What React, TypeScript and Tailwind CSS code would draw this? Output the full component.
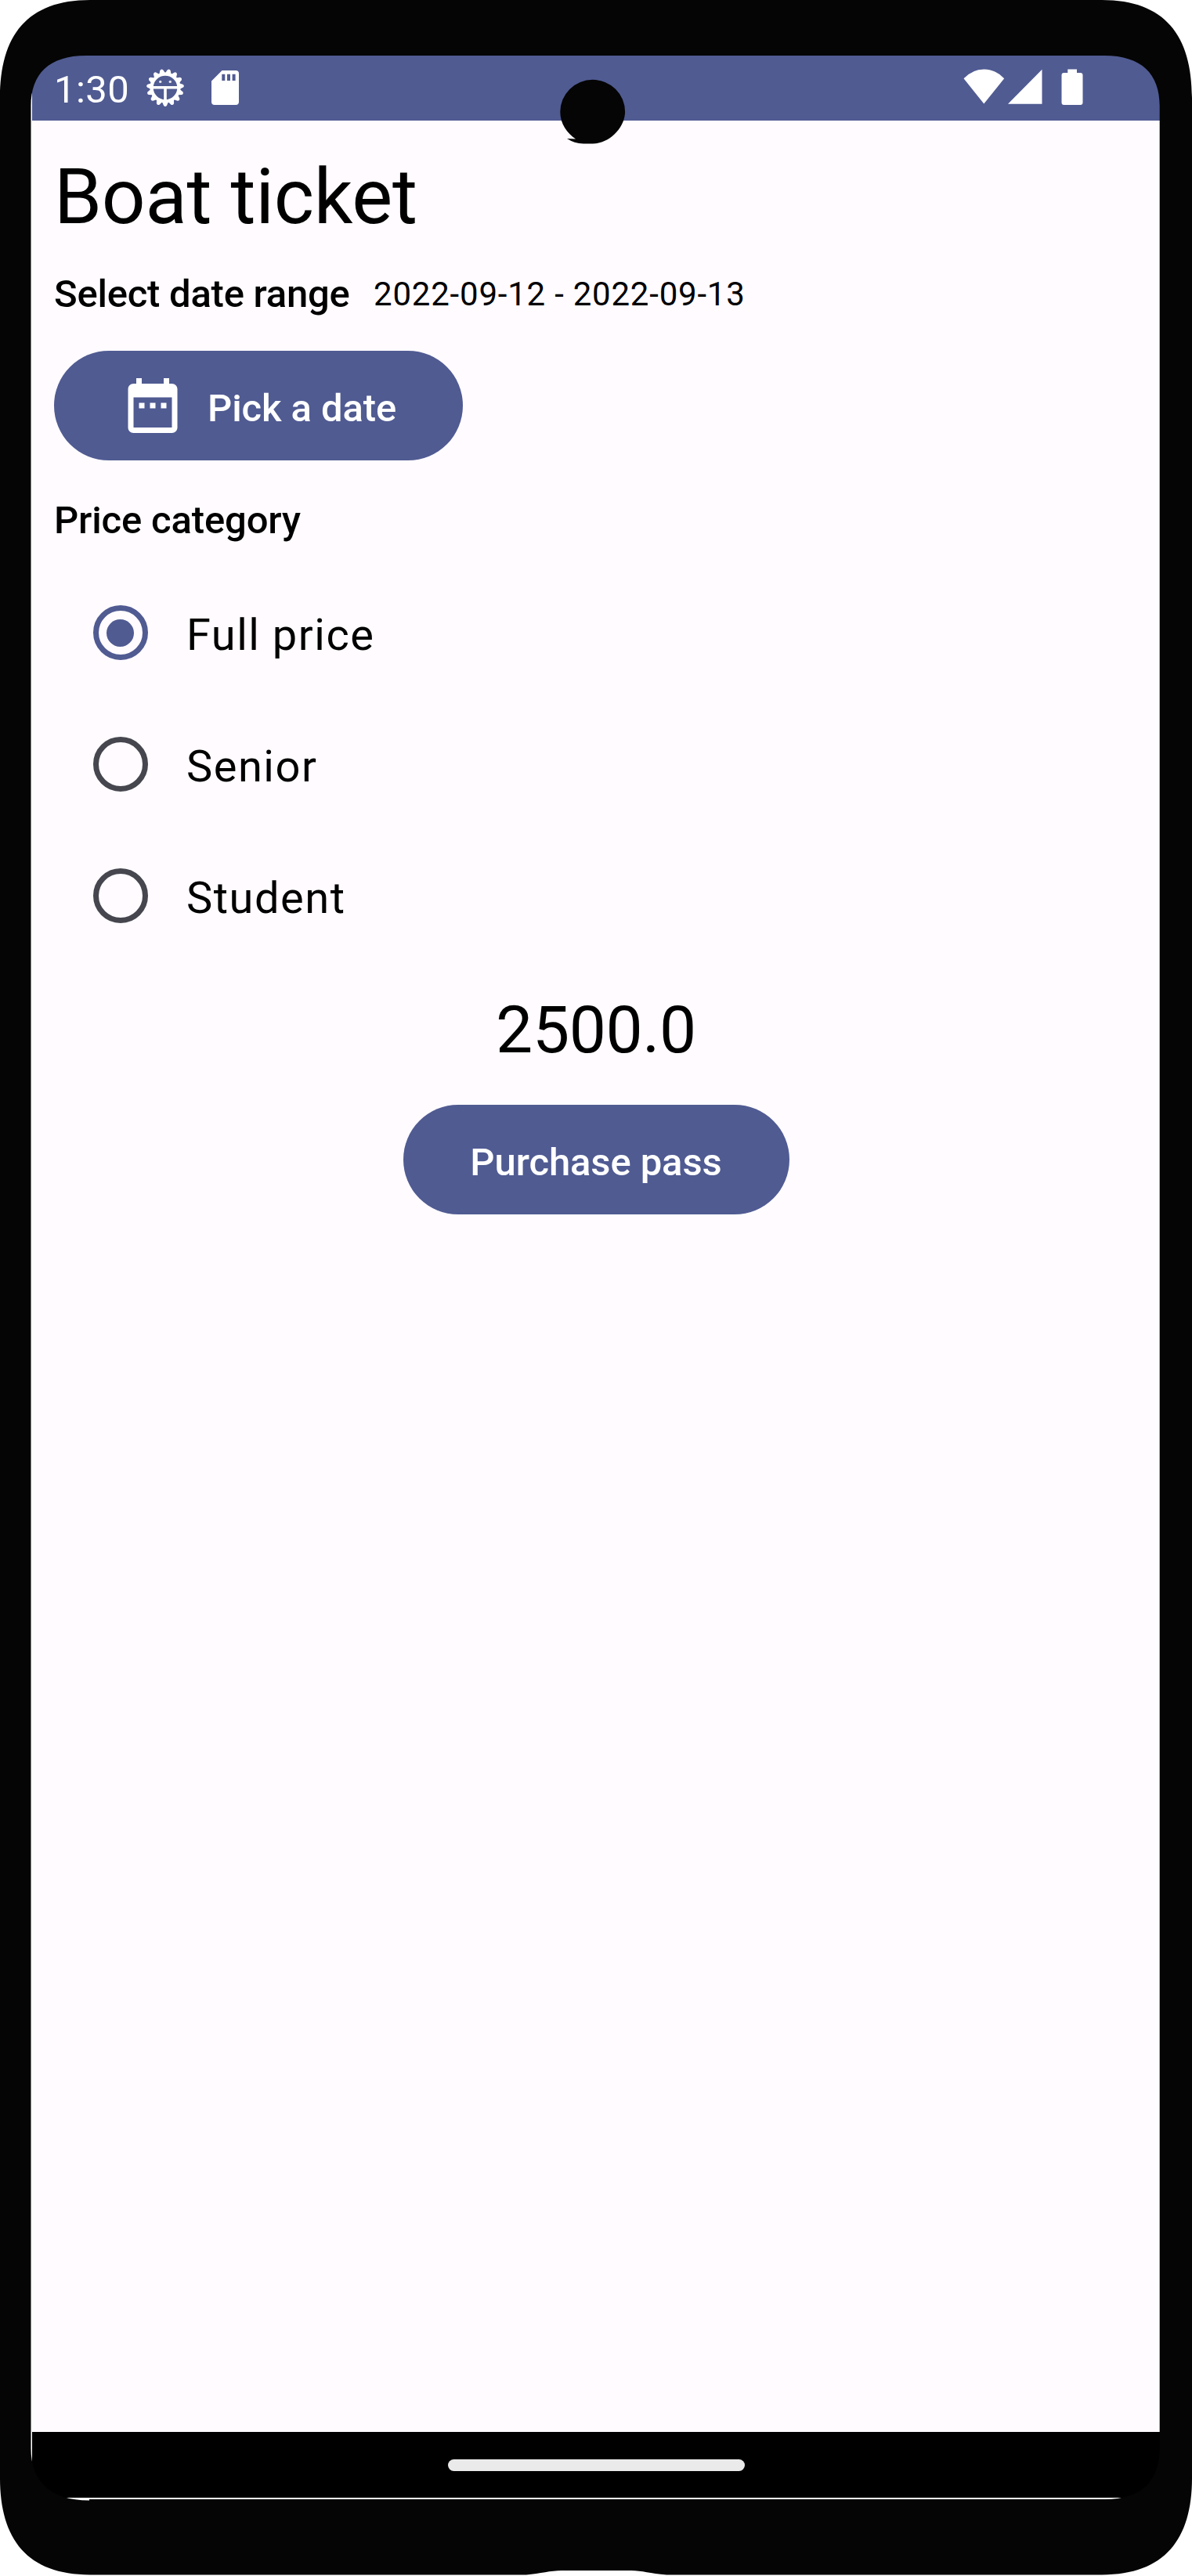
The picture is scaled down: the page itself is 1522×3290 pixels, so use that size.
import React, { useState } from 'react';

const options = ['Full price', 'Senior', 'Student'];

function BugIcon() {
  const teeth = Array.from({ length: 15 }, (_, i) => 180 + i * 24);
  return (
    <svg className="h-[50px] w-[50px]" viewBox="-25 -25 50 50" fill="#fff">
      {teeth.map((a) => (
        <path key={a} d="M-4 -18 L-2 -22.8 Q0 -25.2 2 -22.8 L4 -18 Z" transform={`rotate(${a})`} />
      ))}
      <circle r="17.4" fill="none" stroke="#fff" strokeWidth="4.2" />
      <path d="M-17 -2H17V1.6H1.8V17H-1.8V1.6H-17Z" />
      <circle cx="-6.3" cy="-7.6" r="1.7" opacity="0.85" />
      <circle cx="6.3" cy="-7.6" r="1.7" opacity="0.85" />
    </svg>
  );
}

function SdCardIcon() {
  return (
    <svg className="h-[44px] w-[35px]" viewBox="0 0 35 44">
      <path
        fill="#fff"
        fillRule="evenodd"
        d="M13.5 0H31a4 4 0 0 1 4 4V40a4 4 0 0 1-4 4H4a4 4 0 0 1-4-4V13.5ZM13.3 4.8V13H17.3V4.8ZM20 4.8V13H24V4.8ZM26.6 4.8V13H30.6V4.8Z"
      />
    </svg>
  );
}

function StatusBar() {
  return (
    <div className="flex h-[84px] items-start bg-[#505b92] pl-[28px] text-white">
      <span className="mt-[10px] w-[116.5px] text-[49px] leading-[70px] tracking-[0.4px]">1:30</span>
      <div className="mt-[17px]"><BugIcon /></div>
      <div className="mt-[20px] ml-[34.5px]"><SdCardIcon /></div>
      <div className="mt-[18px] mr-[98px] ml-auto flex">
        <svg className="h-[46px] w-[53px]" viewBox="0 0 53 46" fill="#fff">
          <path d="M0.5 12.3Q11.5 0.4 26.3 0.4T52.2 12.3L26.3 44.5Z" />
        </svg>
        <svg className="ml-[4px] h-[46px] w-[44px]" viewBox="0 0 44 46" fill="#fff">
          <path d="M43.5 0.8V44.7H0Z" />
        </svg>
        <svg className="ml-[24px] h-[46px] w-[28px]" viewBox="0 0 28 46" fill="#fff">
          <path d="M8.3 .6H20V5H24.5a3 3 0 0 1 3 3V43a3 3 0 0 1-3 3H3.5a3 3 0 0 1-3-3V8a3 3 0 0 1 3-3H8.3Z" />
        </svg>
      </div>
    </div>
  );
}

function Radio({ label, checked, onSelect }: { label: string; checked: boolean; onSelect: () => void }) {
  return (
    <button
      role="radio"
      aria-checked={checked}
      onClick={onSelect}
      className="flex h-[168px] items-center pl-[49.5px] text-left"
    >
      <span
        className={
          checked
            ? 'flex h-[70px] w-[70px] items-center justify-center rounded-full border-[7px] border-[#505b92]'
            : 'flex h-[70px] w-[70px] items-center justify-center rounded-full border-[7px] border-[#46464f]'
        }
      >
        {checked && <span className="h-[35px] w-[35px] rounded-full bg-[#505b92]" />}
      </span>
      <span className="ml-[49.5px] pt-[6px] text-[56px] leading-[84px] tracking-[1.5px]">{label}</span>
    </button>
  );
}

/* Device bezel with its camera cutout, laid over the screen. */
function Bezel() {
  return (
    <svg className="pointer-events-none absolute inset-0 h-[3290px] w-[1522px]" viewBox="0 0 1522 3290">
      <path
        fill="#050505"
        fillRule="evenodd"
        d="M115 0H1407C1487 0 1522 45 1522 125V3165C1522 3243 1487 3288.4 1407 3288.4H851C830 3287 820 3283 806 3283H717C703 3283 690 3287 672 3288.4H115C35 3288.4 0 3243 0 3165V125C0 45 35 0 115 0ZM110 71C62 71 39.5 95 39.5 135V3127C39.5 3169 64 3193.5 114 3193.5V3192H1411C1457 3192 1480.7 3169 1480.7 3127V135C1480.7 95 1458 71 1410 71Z"
      />
      <path
        fill="#050505"
        d="M756.7 101.8a41.4 41 0 0 1 41.4 41C798 163 778 183.5 757 183.5H745Q733 183 724 177L735 177.4C724 170 715.3 158 715.3 143A41.4 41 0 0 1 756.7 101.8Z"
      />
    </svg>
  );
}

export default function App() {
  const [selected, setSelected] = useState(options[0]);
  return (
    <div className="relative h-[3290px] w-[1522px] overflow-hidden bg-white pt-[70px] pl-[41px] font-[Roboto,sans-serif] text-black">
      <div className="flex h-[3120px] w-[1440px] flex-col bg-[#fffbff]">
        <StatusBar />
        <main className="flex grow flex-col px-[28px] pt-[35px]">
          <h1 className="text-[98px] leading-[126px] tracking-[-0.25px]">Boat ticket</h1>
          <div className="mt-[26px] flex items-center">
            <span className="text-[49px] leading-[70px] font-medium tracking-[-0.24px]">Select date range</span>
            <span className="ml-[30.5px] text-[42px] leading-[56px] tracking-[0.78px]">2022-09-12 - 2022-09-13</span>
          </div>
          <button className="mt-[37px] flex h-[140px] w-[522px] items-center rounded-full bg-[#505b92] pl-[84px] text-white">
            <svg className="h-[84px] w-[84px]" viewBox="0 0 24 24" fill="currentColor">
              <path d="M9 11H7v2h2v-2zm4 0h-2v2h2v-2zm4 0h-2v2h2v-2zm2-7h-1V2h-2v2H8V2H6v2H5c-1.11 0-1.99.9-1.99 2L3 20c0 1.1.89 2 2 2h14c1.1 0 2-.9 2-2V6c0-1.1-.9-2-2-2zm0 16H5V9h14v11z" />
            </svg>
            <span className="ml-[28px] pt-[7px] text-[49px] leading-[70px] font-medium tracking-[-0.1px]">Pick a date</span>
          </button>
          <h2 className="mt-[42px] text-[49px] leading-[70px] font-medium tracking-[-0.16px]">Price category</h2>
          <div role="radiogroup" className="mt-[24px] flex flex-col">
            {options.map((o) => (
              <Radio key={o} label={o} checked={o === selected} onSelect={() => setSelected(o)} />
            ))}
          </div>
          <p className="mt-[32px] text-center text-[84px] leading-[112px] tracking-[-0.4px]">2500.0</p>
          <button className="mt-[39px] flex h-[140px] w-[493px] items-center justify-center self-center rounded-full bg-[#505b92] pt-[7px] text-[49px] leading-[70px] font-medium tracking-[-0.1px] text-white">
            Purchase pass
          </button>
        </main>
        <div className="flex h-[84px] items-center justify-center bg-black">
          <div className="h-[15px] w-[379px] rounded-full bg-[#eaeaea]" />
        </div>
      </div>
      <Bezel />
    </div>
  );
}
